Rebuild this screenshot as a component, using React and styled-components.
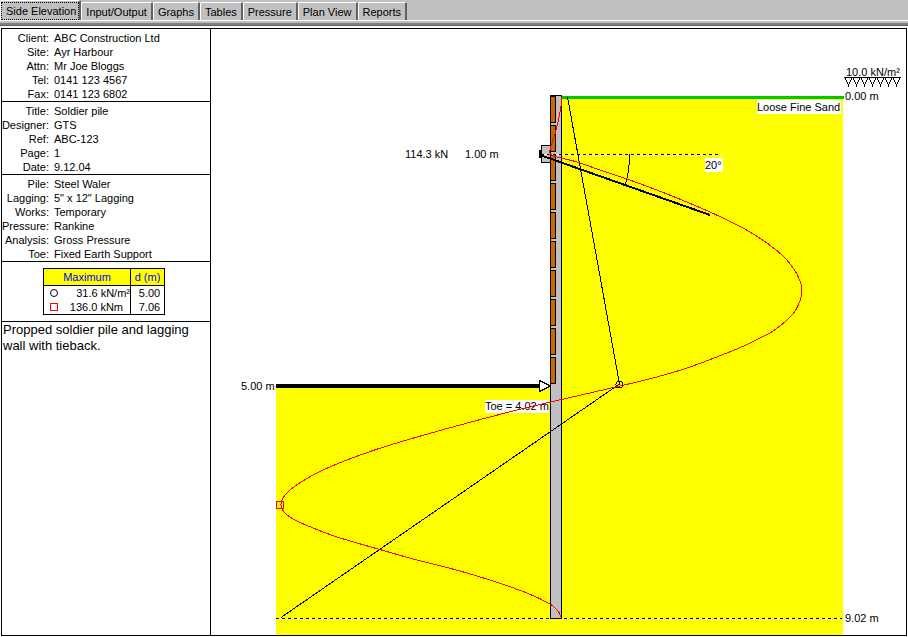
import React, { useState } from "react";
import styled, { createGlobalStyle } from "styled-components";

const GlobalStyle = createGlobalStyle`
  * {
    box-sizing: border-box;
  }

  body {
    margin: 0;
    background-color: #ffffff;
    color: #000000;
    font-family: "Liberation Sans", Arial, sans-serif;
    font-size: 11px;
    line-height: 14px;
  }
`;

const TabBar = styled.div`
  display: flex;
  align-items: flex-end;
  height: 21px;
  background-color: #c0c0c0;
  border-bottom: 1px solid #ffffff;
`;

const Tab = styled.button`
  height: ${(props) => (props.$active ? 20 : 18)}px;
  margin: 0;
  padding: ${(props) => (props.$active ? 0 : "0 4px")};
  border: 1px solid #ffffff;
  border-right: 2px solid #606060;
  border-bottom: none;
  border-radius: 2px 2px 0 0;
  background-color: #c0c0c0;
  color: #000000;
  font-family: inherit;
  font-size: 11px;
  line-height: 16px;
  white-space: nowrap;
`;

const TabFocus = styled.span`
  display: block;
  padding: ${(props) => (props.$active ? "0 2px 0 4px" : 0)};
  border: ${(props) => (props.$active ? "1px dotted #000000" : "none")};
  line-height: 16px;
`;

const Rule = styled.div`
  height: 5px;
  border-top: 2px solid #c0c0c0;
  border-bottom: 1px solid #606060;
  background-color: #808080;
`;

const Sheet = styled.main`
  display: flex;
  align-items: stretch;
  margin: 2px 1px 0;
  border: 1px solid #000000;
`;

const Sidebar = styled.aside`
  flex: 0 0 209px;
  border-right: 1px solid #000000;
`;

const Details = styled.dl`
  display: grid;
  grid-template-columns: 47px 1fr;
  column-gap: 5px;
  margin: 0;
  padding-top: 2px;
  border-bottom: 1px solid #000000;
  white-space: nowrap;
`;

const Label = styled.dt`
  display: flex;
  justify-content: flex-end;
`;

const Value = styled.dd`
  margin: 0;
`;

const MaximumBox = styled.div`
  display: flex;
  justify-content: center;
  padding: 6px 4px 6px 0;
  border-bottom: 1px solid #000000;
`;

const MaximumTable = styled.table`
  width: 122px;
  border: 1px solid #000000;
  border-collapse: separate;
  border-spacing: 0;
  line-height: 14px;
  white-space: nowrap;

  th,
  td {
    padding: 0;
  }

  th {
    height: 17px;
    border-bottom: 1px solid #000000;
    background-color: #ffff00;
    color: #0000ff;
    font-weight: normal;
  }

  th:last-child,
  td:last-child {
    width: 34px;
    border-left: 1px solid #000000;
    text-align: center;
  }

  td {
    height: 14px;
  }

  td:last-child {
    padding-left: 4px;
  }
`;

const Amount = styled.td`
  text-align: right;

  && {
    padding-right: ${(props) => props.$inset || 0}px;
  }
`;

const MarkerCell = styled.td`
  width: 20px;
  text-align: center;

  svg {
    display: block;
    margin: 0 auto;
  }
`;

const Note = styled.p`
  margin: 0;
  padding: 0 1px;
  font-size: 13px;
  line-height: 16px;
`;

const Drawing = styled.svg`
  display: block;
  flex: 1 1 0;
  min-width: 0;
  height: auto;
  font-size: 11px;
  shape-rendering: crispEdges;
`;

const tabs = [
  "Side Elevation",
  "Input/Output",
  "Graphs",
  "Tables",
  "Pressure",
  "Plan View",
  "Reports",
];

const details = [
  [
    ["Client:", "ABC Construction Ltd"],
    ["Site:", "Ayr Harbour"],
    ["Attn:", "Mr Joe Bloggs"],
    ["Tel:", "0141 123 4567"],
    ["Fax:", "0141 123 6802"],
  ],
  [
    ["Title:", "Soldier pile"],
    ["Designer:", "GTS"],
    ["Ref:", "ABC-123"],
    ["Page:", "1"],
    ["Date:", "9.12.04"],
  ],
  [
    ["Pile:", "Steel Waler"],
    ["Lagging:", '5" x 12" Lagging'],
    ["Works:", "Temporary"],
    ["Pressure:", "Rankine"],
    ["Analysis:", "Gross Pressure"],
    ["Toe:", "Fixed Earth Support"],
  ],
];

const momentAbove = [
  [561, 97], [561, 106], [558, 122], [555, 134], [552, 143], [549, 153],
];

const momentBelow = [
  [549, 154], [557, 157], [577, 162], [600, 170], [627, 179], [667, 194],
  [710, 212], [743, 228], [767, 243], [783, 256], [794, 269], [800, 281],
  [802, 290], [800, 301], [792, 315], [773, 331], [748, 344], [727, 353],
  [687, 368], [653, 378], [620, 386], [555, 401], [513, 411], [460, 425],
  [400, 442], [363, 454], [323, 470], [298, 484], [285, 495], [281, 504],
  [284, 512], [293, 519], [313, 528], [337, 537], [378, 549], [417, 560],
  [460, 571], [493, 581], [527, 593], [550, 604], [558, 611], [561, 617],
];

// smooth curve through all the points
const curve = (points) => {
  let d = `M${points[0][0]} ${points[0][1]}`;
  for (let i = 0; i < points.length - 1; i++) {
    const p0 = points[i - 1] || points[i];
    const p1 = points[i];
    const p2 = points[i + 1];
    const p3 = points[i + 2] || p2;
    d += `C${p1[0] + (p2[0] - p0[0]) / 6} ${p1[1] + (p2[1] - p0[1]) / 6}`;
    d += ` ${p2[0] - (p3[0] - p1[0]) / 6} ${p2[1] - (p3[1] - p1[1]) / 6}`;
    d += ` ${p2[0]} ${p2[1]}`;
  }
  return d;
};

const laggings = Array.from({ length: 10 }, (_, i) => 96 + i * 29);
const loads = Array.from({ length: 7 }, (_, i) => 845 + i * 8);

const DashedLine = ({ x1, x2, y }) => (
  <>
    <path d={`M${x1} ${y}H${x2}`} stroke="#ffffff" />
    <path d={`M${x1} ${y}H${x2}`} stroke="#000000" strokeDasharray="3 3" />
  </>
);

const Elevation = () => (
  <Drawing viewBox="211 29 695 606" role="img" aria-label="Side elevation">
    {/* soil */}
    <rect x="276" y="388" width="286" height="247" fill="#ffff00" />
    <rect x="561" y="99" width="282" height="536" fill="#ffff00" />
    <rect x="561" y="96" width="283" height="3" fill="#00c800" />
    <rect x="276" y="384" width="264" height="4" />

    <DashedLine x1={276} x2={842} y={618.5} />

    {/* pile and lagging */}
    <rect x="550.5" y="95.5" width="11" height="523" fill="#c0c0c0" stroke="#000000" />
    {laggings.map((y) => (
      <rect key={y} x="550.5" y={y + 0.5} width="5" height="26" fill="#cc6600" stroke="#000000" />
    ))}
    <path d="M539.5 380.5L550.5 386L539.5 391.5Z" fill="#ffffff" stroke="#000000" />

    {/* tieback */}
    <rect x="541.5" y="145.5" width="9" height="17" fill="#c0c0c0" stroke="#000000" />
    <DashedLine x1={541} x2={721} y={154.5} />
    <rect x="539" y="150" width="2" height="8" />
    <path d="M540 155L710 215" stroke="#000000" strokeWidth="2" />
    <path d="M629.5 154Q629.5 171 625.5 184" fill="none" stroke="#000000" />

    {/* labels with a plain backing */}
    <rect x="757" y="100" width="84" height="14" fill="#ffffff" />
    <rect x="705" y="158" width="18" height="14" fill="#ffffff" />
    <rect x="485" y="400" width="64" height="13" fill="#ffffff" />
    <text x="757" y="111">Loose Fine Sand</text>
    <text x="705" y="169">20°</text>
    <text x="485" y="410">Toe = 4.02 m</text>

    <text x="405" y="158">114.3 kN</text>
    <text x="465" y="158">1.00 m</text>
    <text x="241" y="390">5.00 m</text>
    <text x="845" y="100">0.00 m</text>
    <text x="845" y="622">9.02 m</text>

    {/* surcharge */}
    <text x="846" y="76">10.0 kN/m²</text>
    <path d="M844 77.5H901" stroke="#000000" />
    {loads.map((x) => (
      <path key={x} d={`M${x} 77.5h7l-3.5 8z`} fill="#ffffff" stroke="#000000" />
    ))}

    {/* pressure */}
    <path d="M567.5 97L619.5 384L281 617.5" fill="none" stroke="#000000" />
    <circle cx="619.5" cy="384.5" r="3.5" fill="none" stroke="#000000" />

    {/* moment */}
    <path d={curve(momentAbove)} fill="none" stroke="#ff0000" />
    <path d={curve(momentBelow)} fill="none" stroke="#ff0000" />
    <rect x="276.5" y="501.5" width="7" height="7" fill="none" stroke="#ff0000" />
  </Drawing>
);

const App = () => {
  const [active, setActive] = useState("Side Elevation");

  return (
    <>
      <GlobalStyle />
      <TabBar role="tablist">
        {tabs.map((name) => (
          <Tab
            key={name}
            type="button"
            role="tab"
            aria-selected={name === active}
            $active={name === active}
            onClick={() => setActive(name)}
          >
            <TabFocus $active={name === active}>{name}</TabFocus>
          </Tab>
        ))}
      </TabBar>
      <Rule />
      <Sheet>
        <Sidebar>
          {details.map((rows) => (
            <Details key={rows[0][0]}>
              {rows.map(([label, value]) => (
                <React.Fragment key={label}>
                  <Label>{label}</Label>
                  <Value>{value}</Value>
                </React.Fragment>
              ))}
            </Details>
          ))}
          <MaximumBox>
            <MaximumTable>
              <thead>
                <tr>
                  <th colSpan={2}>Maximum</th>
                  <th>d (m)</th>
                </tr>
              </thead>
              <tbody>
                <tr>
                  <MarkerCell>
                    <svg width="8" height="8" aria-hidden="true">
                      <circle cx="4" cy="4" r="3.5" fill="none" stroke="#000000" />
                    </svg>
                  </MarkerCell>
                  <Amount>31.6 kN/m²</Amount>
                  <td>5.00</td>
                </tr>
                <tr>
                  <MarkerCell>
                    <svg width="8" height="8" aria-hidden="true">
                      <rect x="0.5" y="0.5" width="7" height="7" fill="none" stroke="#ff0000" />
                    </svg>
                  </MarkerCell>
                  <Amount $inset={7}>136.0 kNm</Amount>
                  <td>7.06</td>
                </tr>
              </tbody>
            </MaximumTable>
          </MaximumBox>
          <Note>Propped soldier pile and lagging wall with tieback.</Note>
        </Sidebar>
        <Elevation />
      </Sheet>
    </>
  );
};

export default App;
